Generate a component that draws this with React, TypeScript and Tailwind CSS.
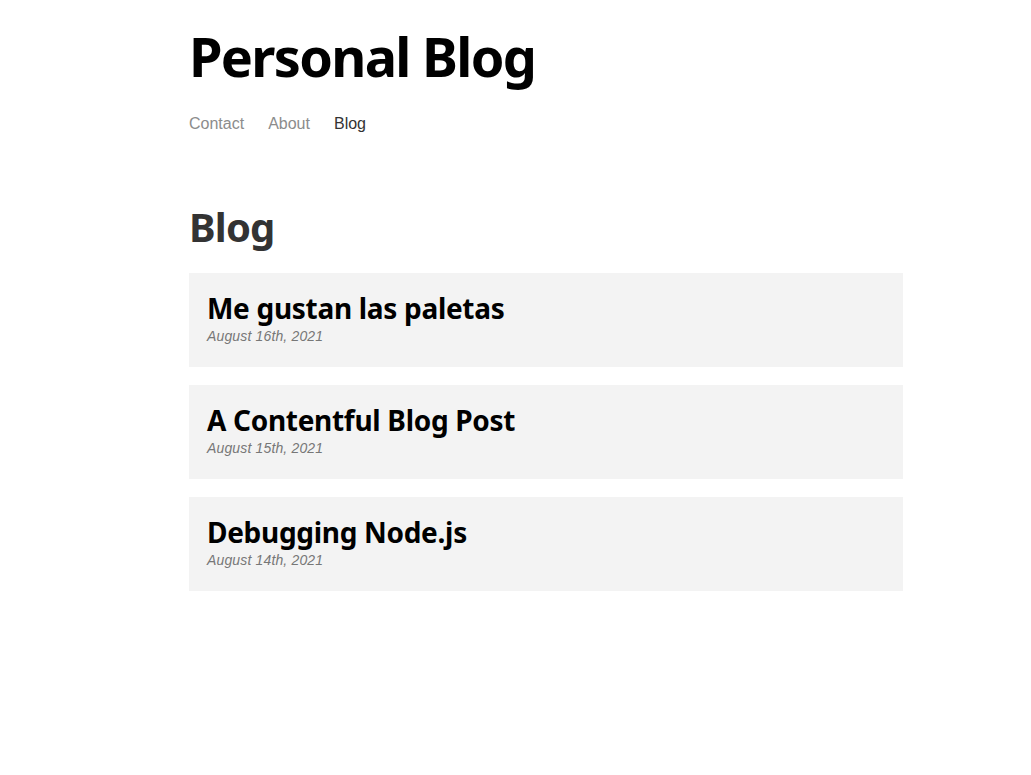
import React from "react";

const posts = [
  { title: "Me gustan las paletas", date: "August 16th, 2021" },
  { title: "A Contentful Blog Post", date: "August 15th, 2021" },
  { title: "Debugging Node.js", date: "August 14th, 2021" },
];

export default function App() {
  return (
    <div className="min-h-[775px] bg-white">
      <div className="ml-[189px] w-[714px]">
        <header className="pt-[22px]">
          <h1 className="font-['Noto_Sans',sans-serif] font-bold text-[54px] leading-[68px] tracking-[-1.7px] text-black">
            Personal Blog
          </h1>
          <nav className="mt-[24px] flex gap-6 font-['Liberation_Sans',Arial,sans-serif] text-[16px] leading-[20px]">
            <a className="text-[#8c8c8c]">Contact</a>
            <a className="text-[#8c8c8c]">About</a>
            <a className="text-[#333333]">Blog</a>
          </nav>
        </header>
        <main className="mt-[67px]">
          <h2 className="font-['Noto_Sans',sans-serif] font-bold text-[40px] leading-[52px] tracking-[-0.8px] text-[#333333]">
            Blog
          </h2>
          <ul className="mt-[20px] flex flex-col gap-[18px]">
            {posts.map((p) => (
              <li key={p.title} className="h-[94px] bg-[#f3f3f3] px-[18px] pt-[17px]">
                <h3 className="font-['Noto_Sans',sans-serif] font-bold text-[28px] leading-[36px] tracking-[-0.3px] text-black">
                  {p.title}
                </h3>
                <p className="mt-[2px] font-['Liberation_Sans',Arial,sans-serif] italic text-[14px] leading-[16px] tracking-[0.15px] text-[#777777]">
                  {p.date}
                </p>
              </li>
            ))}
          </ul>
        </main>
      </div>
    </div>
  );
}
